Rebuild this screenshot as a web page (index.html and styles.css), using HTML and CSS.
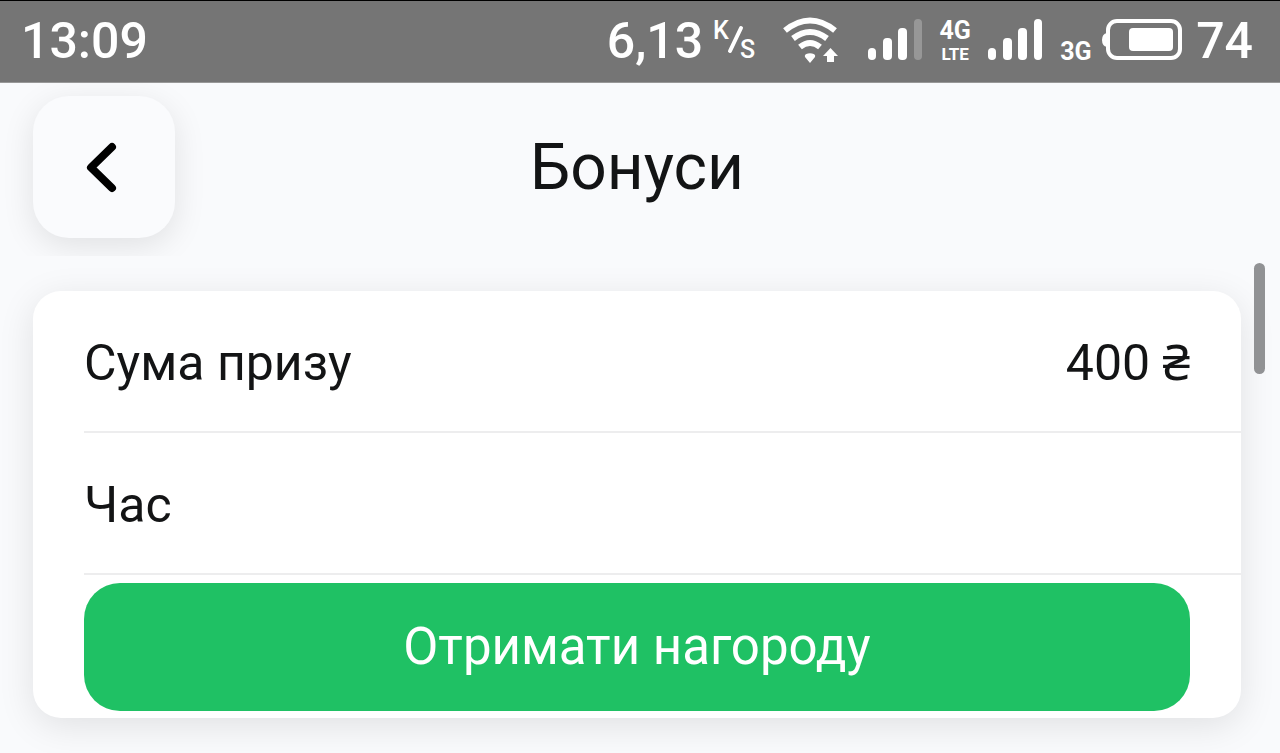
FILE: index.html
```html
<!DOCTYPE html>
<html lang="uk">
<head>
<meta charset="utf-8">
<meta name="viewport" content="width=device-width, initial-scale=1">
<title>Бонуси</title>
<link rel="stylesheet" href="styles.css">
</head>
<body>
<div class="status-bar">
  <time class="status-text">13:09</time>
  <div class="status-icons">
    <span class="status-text">6,13</span>
    <svg class="rate" width="44" height="42" viewBox="0 0 44 42" role="img" aria-label="K/s">
      <text class="rate-text" x="0" y="19">K</text>
      <path d="M28 8 17 31" stroke="#fff" stroke-width="4" stroke-linecap="round"/>
      <text class="rate-text" x="27" y="38">S</text>
    </svg>
    <svg class="wifi" width="56" height="46" viewBox="0 0 56 46" fill="none" stroke="#fff" stroke-width="6" aria-hidden="true">
      <path d="M2 12.500Q27-7.500 52 12.500" />
      <path d="M10 20.500Q27 7.500 44 20.500" />
      <path d="M17 29Q27 21 37 29" />
      <path d="M27 45 22 39Q21 36 25 35.500Q27 35 29 35.500Q33 36 32 39Z" fill="#fff" stroke="none"/>
      <path d="M47.500 30 55 38H51V44H44V38H40Z" fill="#fff" stroke="none"/>
    </svg>
    <svg class="signal" width="56" height="42" viewBox="0 0 56 42" fill="#fff" aria-hidden="true">
      <rect x="1" y="28" width="8" height="12" rx="4"/><rect x="16" y="18" width="9" height="22" rx="4"/><rect x="31" y="8" width="9" height="32" rx="4"/><rect class="bar-off" x="47" y="-1" width="8" height="41" rx="4"/>
    </svg>
    <span class="network-pair"><span class="network">4G</span><span class="network-sub">LTE</span></span>
    <svg class="signal" width="56" height="42" viewBox="0 0 56 42" fill="#fff" aria-hidden="true">
      <rect x="1" y="28" width="8" height="12" rx="4"/><rect x="16" y="18" width="9" height="22" rx="4"/><rect x="31" y="8" width="9" height="32" rx="4"/><rect x="47" y="-1" width="8" height="41" rx="4"/>
    </svg>
    <span class="network network-low">3G</span>
    <svg class="battery" width="80" height="42" viewBox="0 0 80 42" fill="none" aria-hidden="true">
      <path d="M5 13Q0 14 0 20T5 27Z" fill="#fff"/>
      <rect x="6" y="1" width="72" height="37" rx="9" stroke="#fff" stroke-width="4"/>
      <rect x="27" y="8" width="44" height="23" rx="4" fill="#fff"/>
    </svg>
    <span class="status-text">74</span>
  </div>
</div>
<header class="header">
  <button class="back" type="button" aria-label="Назад">
    <svg width="32" height="52" viewBox="0 0 32 52" fill="none" stroke="#000" stroke-width="8" stroke-linecap="round" stroke-linejoin="round" aria-hidden="true"><path d="M26 6 5 26.500 26 47"/></svg>
  </button>
  <h1 class="title">Бонуси</h1>
</header>
<main class="content">
  <section class="card">
    <dl class="details">
      <div class="row"><dt>Сума призу</dt><dd>400 ₴</dd></div>
      <div class="row"><dt>Час</dt><dd></dd></div>
    </dl>
    <button class="claim" type="button">Отримати нагороду</button>
  </section>
  <div class="scroll-thumb"></div>
</main>
</body>
</html>
```
FILE: styles.css
```css
* { box-sizing: border-box; }

body {
  margin: 0;
  min-height: 100vh;
  overflow: hidden;
  background: #f9fafc;
  color: #131415;
  font-family: Roboto, "Noto Sans", sans-serif;
}

.status-bar {
  display: flex;
  justify-content: space-between;
  align-items: center;
  height: 83px;
  padding: 0 27px 2px 21px;
  border-top: 1px solid #000;
  border-bottom: 1px solid #989898;
  background: #757575;
  color: #fff;
}

.status-text {
  font-size: 50px;
  font-weight: 500;
  line-height: 60px;
}

.status-icons { display: flex; align-items: center; }
.status-icons svg { overflow: visible; }
.rate { margin-left: 10px; }
.rate-text { fill: #fff; font-size: 25px; font-weight: 500; }
.wifi { margin-left: 26px; }
.signal { margin-left: 17px; }
.wifi + .signal { margin-left: 28px; }
.bar-off { opacity: 0.25; }

.network-pair {
  display: flex;
  flex-direction: column;
  align-items: center;
  width: 30px;
  margin-left: 17px;
}

.network {
  font-size: 25px;
  font-weight: 700;
  line-height: 26px;
}

.network-sub {
  font-size: 17px;
  font-weight: 700;
  line-height: 20px;
}

.network-low {
  align-self: flex-end;
  width: 32px;
  margin: 0 10px 6px 17px;
}

.battery { margin-right: 14px; }

.header {
  display: grid;
  grid-template-columns: 142px 1fr 142px;
  align-items: center;
  padding: 13px 39px 18px 33px;
  overflow: hidden;
}

.back {
  display: flex;
  align-items: center;
  justify-content: center;
  height: 142px;
  padding: 0 4px 0 0;
  border: 0;
  border-radius: 36px;
  background: #fafbfd;
  box-shadow: 0 8px 32px rgba(0, 0, 0, 0.1);
}

.title {
  margin: 0;
  padding-top: 2px;
  font-size: 64px;
  font-weight: 400;
  line-height: 76px;
  text-align: center;
}

.content {
  position: relative;
  padding: 35px 39px 35px 33px;
}

.card {
  padding: 0 0 7px 51px;
  border-radius: 28px;
  background: #fff;
  box-shadow: 0 8px 36px rgba(0, 0, 0, 0.1);
}

.details { margin: 0; }

.row {
  display: flex;
  align-items: center;
  justify-content: space-between;
  height: 142px;
  padding: 4px 51px 0 0;
  border-bottom: 2px solid #ededee;
  font-size: 50px;
  line-height: 60px;
}

.row dd { margin: 0; }

.claim {
  display: block;
  width: calc(100% - 51px);
  height: 128px;
  margin-top: 8px;
  padding: 0;
  border: 0;
  border-radius: 36px;
  background: #1fc164;
  color: #fff;
  font-family: inherit;
  font-size: 51px;
  line-height: 60px;
}

.scroll-thumb {
  position: absolute;
  top: 7px;
  right: 15px;
  width: 11px;
  height: 111px;
  border-radius: 6px;
  background: #919294;
}
```
